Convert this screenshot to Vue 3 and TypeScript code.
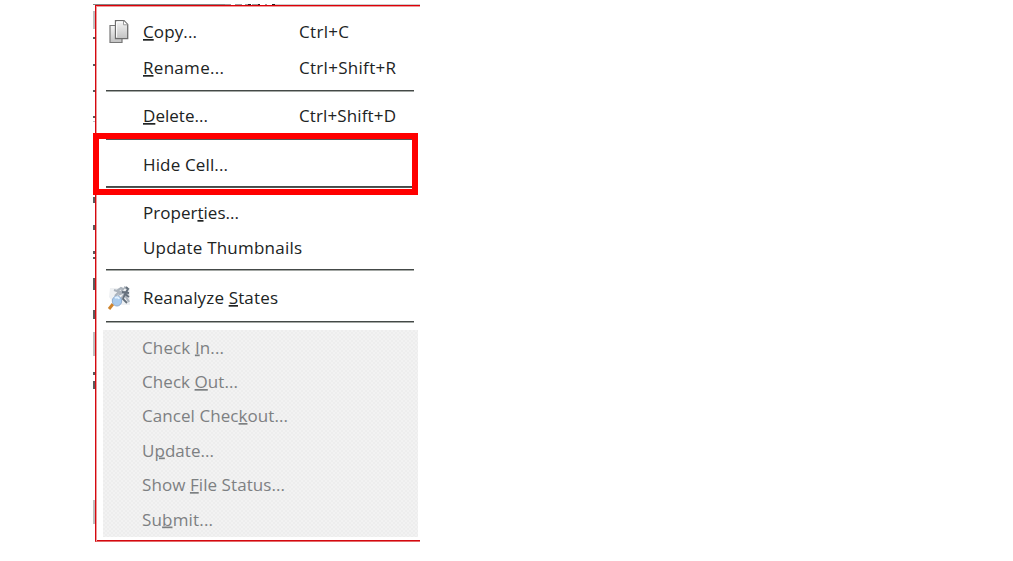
<script setup lang="ts">
interface MenuItem {
  before: string
  key?: string
  after?: string
  shortcut?: string
  icon?: 'copy' | 'analyze'
  width: number
  size: string
  baseline: number
}

const groups: MenuItem[][] = [
  [
    { before: '', key: 'C', after: 'opy...', shortcut: 'Ctrl+C', icon: 'copy', width: 54, size: 'tall', baseline: 19 },
    { before: '', key: 'R', after: 'ename...', shortcut: 'Ctrl+Shift+R', width: 81, size: 'tall', baseline: 19 },
  ],
  [{ before: '', key: 'D', after: 'elete...', shortcut: 'Ctrl+Shift+D', width: 65, size: 'normal', baseline: 19 }],
  [{ before: 'Hide Cell...', width: 85, size: 'normal', baseline: 20 }],
  [
    { before: 'Proper', key: 't', after: 'ies...', width: 96, size: 'normal', baseline: 19 },
    { before: 'Update Thumbnails', width: 159, size: 'normal', baseline: 20 },
  ],
  [{ before: 'Reanalyze ', key: 'S', after: 'tates', icon: 'analyze', width: 135, size: 'normal', baseline: 20 }],
]

const disabledItems: MenuItem[] = [
  { before: 'Check ', key: 'I', after: 'n...', width: 82, size: 'small', baseline: 19.5 },
  { before: 'Check ', key: 'O', after: 'ut...', width: 96, size: 'small', baseline: 19 },
  { before: 'Cancel Chec', key: 'k', after: 'out...', width: 146, size: 'small', baseline: 19 },
  { before: 'U', key: 'p', after: 'date...', width: 72, size: 'small', baseline: 19.5 },
  { before: 'Show ', key: 'F', after: 'ile Status...', width: 143, size: 'small', baseline: 19 },
  { before: 'Su', key: 'b', after: 'mit...', width: 71, size: 'small', baseline: 19.5 },
]
</script>

<template>
  <main class="page">
    <svg class="backdrop" width="430" height="561" viewBox="0 0 430 561" aria-hidden="true">
      <path d="M93 4.5H225" stroke="#858585" />
      <path d="M225 4.5h6m4 0h7m3 0h4m3 0h7m6 0h2m5 0h3" stroke="#999" />
      <path d="M248 4.5h3m7 0h2m12 0h3" stroke="#222" />
      <path d="M275 4.5H420" stroke="#ccc" />
      <path d="M94 11v18M94 121v1M94 332v24M94 500v24" stroke="#aaa" stroke-width="1.5" />
      <path d="M94 37v2m0 25v2m0 24v2m0 24v2m0 79v6m0 22v5m0 21v3m0 3v2m0 19v12m0 20v9m0 53v3m0 6v8" stroke="#333" stroke-width="1.6" />
    </svg>

    <nav class="menu">
      <section v-for="(group, g) in groups" :key="g" class="group" :class="'group-' + g">
        <div v-for="item in group" :key="item.before + item.after" class="row" :class="item.size">
          <span class="icon">
            <svg v-if="item.icon === 'copy'" class="copy-icon" width="20" height="24" viewBox="0 0 20 24">
              <defs>
                <linearGradient id="paper" x1="0" y1="0" x2="0" y2="1">
                  <stop stop-color="#f5f5f5" /><stop offset="1" stop-color="#c2c2c2" />
                </linearGradient>
              </defs>
              <path d="M1 5.5h12v17H1z" fill="url(#paper)" stroke="#777" stroke-width="1.2" />
              <path d="M6.5.7h8.5l3.7 3.8v14.2H6.5z" fill="url(#paper)" stroke="#6c6c6c" stroke-width="1.3" />
              <path d="M7.6 17.5V1.9H14" fill="none" stroke="#fff" />
              <path d="M14.5.8v4h4" fill="#fff" stroke="#999" />
            </svg>
            <svg v-else-if="item.icon === 'analyze'" width="25" height="26" viewBox="0 0 25 26">
              <path d="M3 3h20v17H8L2 12z" fill="#eff1f3" />
              <path d="M7 5l3 1 4-3 2 1-3 5 5-2 3 3M13 6l-5 5M17 2l4 2-3 6 4 7M18 9l-5 6" fill="none" stroke="#abb3bc" stroke-width="2.2" />
              <path d="M19 2l2 2-3 5 4 3m-4-3-2 5 4 4M15 7l7 1" fill="none" stroke="#65707c" stroke-width="1.8" />
              <path d="M6 19l-4 5" stroke="#ce842d" stroke-width="3" />
              <ellipse cx="10" cy="16" rx="4.7" ry="5" fill="#a9cbed" stroke="#8fabcd" />
              <path d="M8 13q3-2 4 1" fill="none" stroke="#e1f1ff" stroke-width="2" />
            </svg>
          </span>
          <svg class="label" :width="item.width + 4" height="28">
            <text x="0" :y="item.baseline" :textLength="item.width" lengthAdjust="spacing">{{ item.before }}<tspan v-if="item.key" class="key">{{ item.key }}</tspan>{{ item.after }}</text>
          </svg>
          <svg v-if="item.shortcut" class="shortcut" width="104" height="28">
            <text x="0" :y="item.baseline" :textLength="item.shortcut === 'Ctrl+C' ? 50 : 97">{{ item.shortcut }}</text>
          </svg>
        </div>
      </section>

      <section class="disabled">
        <div v-for="item in disabledItems" :key="item.before + item.key" class="row small">
          <span class="icon"></span>
          <svg class="label" :width="item.width + 4" height="28">
            <text x="0" :y="item.baseline" :textLength="item.width">{{ item.before }}<tspan class="key">{{ item.key }}</tspan>{{ item.after }}</text>
          </svg>
        </div>
      </section>
      <div class="highlight"></div>
    </nav>
  </main>
</template>

<style>
body { background: #fff; overflow: hidden; }
</style>

<style scoped>
.page {
  position: relative;
  width: 1013px;
  height: 561px;
  padding: 5px 0 0 95px;
  box-sizing: border-box;
  font-family: "Open Sans", "Noto Sans", sans-serif;
  font-size: 17px;
  color: #202323;
}
.backdrop { position: absolute; left: 0; top: 0; }
.menu {
  position: relative;
  box-sizing: border-box;
  width: 325px;
  height: 537px;
  border-top: 1px solid #dc0008;
  border-bottom: 1px solid #e46b6b;
  border-left: 1px solid #d40810;
  background: #fff;
  box-shadow: inset 1px 0 #ef9a9a, inset 0 1px #ef9a9a, inset 0 -1px #d40810;
}
.group { position: relative; }
.group::after {
  content: "";
  display: block;
  width: 308px;
  height: 1px;
  margin: 4px 0 0 10px;
  background: #444947;
  border-bottom: 1px solid #a4a8a5;
}
.group-0 { padding-top: 9px; }
.group-0::after { margin-top: 3px; }
.group-1, .group-2 { padding-top: 8px; }
.group-1::after, .group-2::after { border-bottom-color: #555; }
.group-3 { padding-top: 9px; }
.group-4 { padding-top: 10px; }
.group-4::after { margin-top: 6px; }
.row { display: flex; align-items: center; height: 34px; }
.tall { height: 36px; }
.icon {
  display: flex;
  align-items: center;
  width: 35px;
  height: 26px;
  margin-left: 11.6px;
}
.copy-icon { margin: 0 0 3px 1px; }
.icon > svg:not(.copy-icon) { margin-left: -1px; }
.label { display: block; overflow: visible; }
.shortcut { display: block; margin-left: auto; margin-right: 17px; overflow: visible; }
text { fill: currentColor; }
.key {
  text-decoration: underline;
  text-decoration-thickness: 1.3px;
  text-underline-offset: 4px;
  text-decoration-skip-ink: none;
}
.disabled {
  width: 315px;
  height: 207px;
  margin: 7px 0 0 7px;
  padding-top: 1px;
  box-sizing: border-box;
  color: #7d8082;
  background: repeating-conic-gradient(#ededed 0 25%, #f2f2f2 0 50%) 0 0 / 4px 4px;
}
.disabled .row { height: 34.4px; }
.disabled .icon { margin-left: 4.3px; }
.highlight {
  position: absolute;
  left: -3px;
  top: 127px;
  width: 325px;
  height: 62px;
  box-sizing: border-box;
  border: 6px solid #ff0000;
}
</style>
